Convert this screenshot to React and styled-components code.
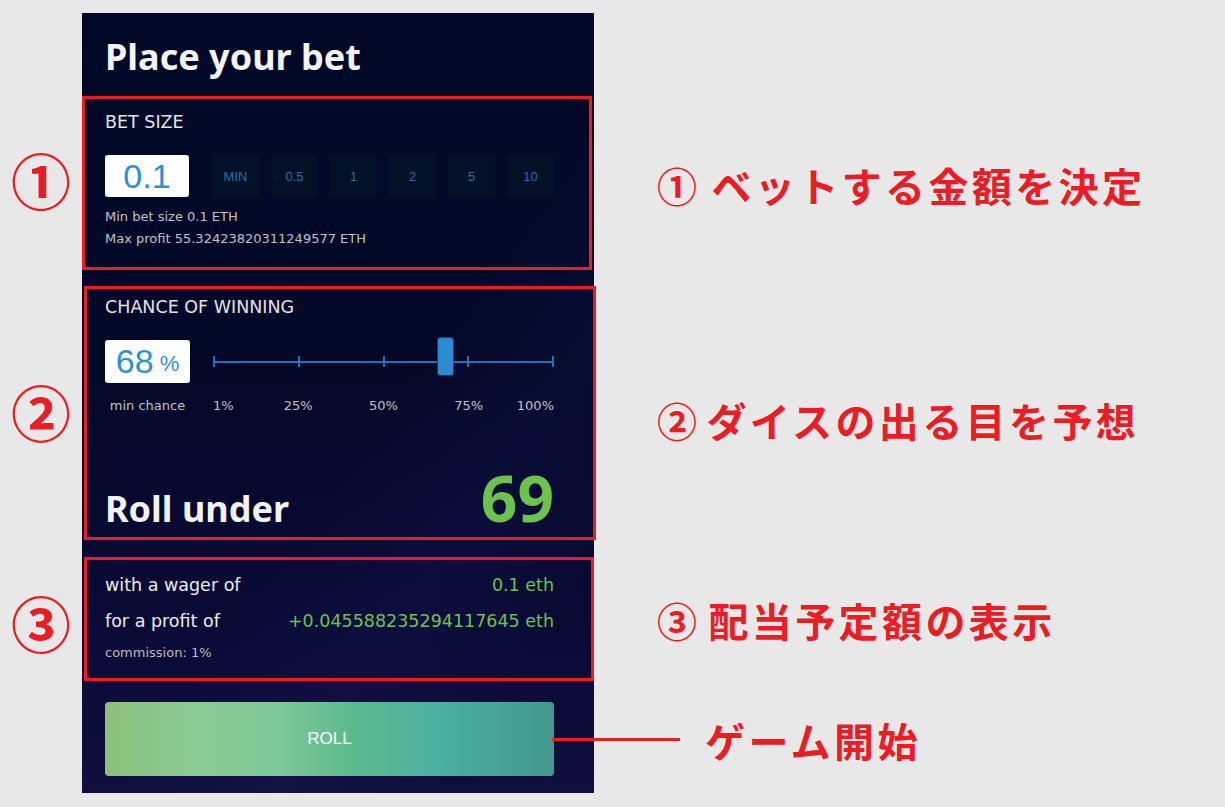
import React from "react";
import styled, { createGlobalStyle } from "styled-components";

const GlobalStyle = createGlobalStyle`
  html, body {
    margin: 0;
    padding: 0;
    background: #e8e8e8;
  }
  #root {
    padding-top: 13px;
  }
`;

const red = "#ec1c24";
const green = "#6cc24a";
const blue = "#2f8fd3";
const textFont = `"DejaVu Sans", "Noto Sans", sans-serif`;

const Page = styled.div`
  display: grid;
  grid-template-columns: 82px 512px 1fr;
  grid-template-rows: 83px 174px 16px 254px 17px 124px 112px;
  font-family: "Noto Sans", "Open Sans", sans-serif;
`;

const PanelBg = styled.div`
  grid-column: 2;
  grid-row: 1 / -1;
  background:
    linear-gradient(125deg, rgba(255, 255, 255, 0) 55%, rgba(40, 40, 120, 0.12) 70%, rgba(255, 255, 255, 0) 85%),
    linear-gradient(180deg, #020828 0%, #030828 45%, #0a0b36 80%, #100f3d 100%);
`;

const Title = styled.h1`
  grid-column: 2;
  grid-row: 1;
  margin: 0;
  padding: 20px 0 0 23px;
  color: #f2f2f2;
  font-size: 36px;
  font-weight: 700;
  line-height: 48px;
`;

const Box = styled.section`
  grid-column: 2;
  grid-row: ${(p) => p.row};
  margin-left: ${(p) => p.ml}px;
  width: ${(p) => p.w}px;
  box-sizing: border-box;
  border: 3px solid ${red};
  padding: ${(p) => p.pad};
  display: flex;
  flex-direction: column;
  z-index: 1;
`;

const Label = styled.div`
  color: #e4e4e4;
  font-family: ${textFont};
  font-size: 17.5px;
  line-height: 20px;
`;

const InputRow = styled.div`
  display: flex;
  align-items: center;
  gap: 23px;
  margin-top: ${(p) => p.mt}px;
`;

const ValueBox = styled.div`
  width: 85px;
  height: ${(p) => p.h}px;
  box-sizing: border-box;
  background: #fff;
  border-radius: 3px;
  display: flex;
  align-items: center;
  justify-content: center;
  color: ${blue};
  font-family: "Liberation Sans", Arial, sans-serif;
  font-size: 34px;
`;

const Percent = styled.span`
  font-size: 22px;
  margin-left: 6px;
  margin-top: 4px;
`;

const Presets = styled.div`
  display: flex;
  gap: 12px;
`;

const Preset = styled.button`
  width: 47px;
  height: 42px;
  border: 0;
  border-radius: 3px;
  background: #031127;
  color: #1f70ae;
  font-family: "Liberation Sans", Arial, sans-serif;
  font-size: 13px;
  padding: 0;
`;

const Note = styled.div`
  color: #c2c2c2;
  font-family: ${textFont};
  font-size: 13px;
  line-height: 22px;
`;

const Notes = styled.div`
  margin-top: 9px;
`;

const Slider = styled.div`
  position: relative;
  flex: 1;
  height: 12px;
  display: flex;
  justify-content: space-between;
  align-items: center;
  background: linear-gradient(#1f74b5, #1f74b5) center / 100% 2px no-repeat;
`;

const Tick = styled.span`
  width: 2px;
  height: 11px;
  background: #1f74b5;
`;

const Thumb = styled.span`
  position: absolute;
  top: -19px;
  width: 17px;
  height: 39px;
  border-radius: 3px;
  background: #2a8bd1;
  border: 1px solid #0f3b66;
  box-sizing: border-box;
`;

const ScaleRow = styled.div`
  display: grid;
  grid-template-columns: 85px 1fr;
  column-gap: 23px;
  margin-top: 13px;
`;

const Scale = styled.div`
  display: grid;
  grid-template-columns: repeat(8, 1fr);
`;

const ScaleLabel = styled(Note)`
  font-size: 13px;
  line-height: 20px;
  white-space: nowrap;
  text-align: ${(p) => p.align || "center"};
  grid-column: ${(p) => p.span};
`;

const RollUnder = styled.div`
  margin-top: auto;
  display: flex;
  justify-content: space-between;
  align-items: baseline;
`;

const RollText = styled.div`
  color: #f2f2f2;
  font-size: 36px;
  font-weight: 700;
  line-height: 40px;
`;

const RollNumber = styled.div`
  color: ${green};
  font-size: 64px;
  font-weight: 700;
  line-height: 62px;
`;

const PayRow = styled.div`
  display: flex;
  justify-content: space-between;
  font-family: ${textFont};
  font-size: 17.5px;
  line-height: 22px;
  color: #ececec;
  margin-bottom: 14px;
`;

const Green = styled.span`
  color: ${green};
  font-size: 17.5px;
`;

const Commission = styled.div`
  color: #bdbdbd;
  font-family: ${textFont};
  font-size: 13px;
  line-height: 18px;
  margin-top: -2px;
`;

const RollRow = styled.div`
  grid-column: 2 / 4;
  grid-row: 7;
  display: flex;
  align-items: center;
  align-self: start;
  padding: 21px 0 0 23px;
`;

const RollButton = styled.button`
  width: 449px;
  height: 74px;
  border: 0;
  border-radius: 4px;
  background: linear-gradient(
    90deg,
    #8cc17a 0%,
    #89ca94 20%,
    #7fc898 38%,
    #5dba8e 55%,
    #4aafa0 75%,
    #44978c 100%
  );
  color: #fff;
  font-family: "Liberation Sans", Arial, sans-serif;
  font-size: 17px;
  padding: 0;
`;

const Connector = styled.span`
  width: 128px;
  height: 3px;
  margin-left: -2px;
  background: ${red};
  z-index: 1;
`;

const Callout = styled.div`
  grid-column: 3;
  grid-row: ${(p) => p.row};
  align-self: center;
  padding-left: ${(p) => p.pl || 63}px;
  margin-top: ${(p) => p.mt || 0}px;
  color: ${red};
  font-family: "Noto Sans CJK JP", sans-serif;
  font-weight: 700;
  font-size: 40px;
  letter-spacing: 3.4px;
  white-space: nowrap;
`;

const Num = styled.span`
  margin-right: ${(p) => p.gap}px;
`;

const GameStart = styled(Callout)`
  padding-left: 25px;
  margin-top: 2px;
`;

const Marker = styled.div`
  grid-column: 1;
  grid-row: ${(p) => p.row};
  align-self: center;
  justify-self: center;
  margin-top: ${(p) => p.mt || 0}px;
  color: ${red};
  font-family: "Noto Sans CJK JP", sans-serif;
  font-weight: 700;
  font-size: 60px;
  line-height: 1;
`;

const presets = ["MIN", "0.5", "1", "2", "5", "10"];

export default function App() {
  return (
    <>
      <GlobalStyle />
      <Page>
        <PanelBg />
        <Title>Place your bet</Title>

        <Marker row={2} mt={-8}>①</Marker>
        <Box row={2} ml={0} w={510} pad="13px 35px 17px 20px">
          <Label>BET SIZE</Label>
          <InputRow mt={23}>
            <ValueBox h={42}>0.1</ValueBox>
            <Presets>
              {presets.map((p) => (
                <Preset key={p}>{p}</Preset>
              ))}
            </Presets>
          </InputRow>
          <Notes>
            <Note>Min bet size 0.1 ETH</Note>
            <Note>Max profit 55.32423820311249577 ETH</Note>
          </Notes>
        </Box>
        <Callout row={2} mt={4}>
          <Num gap={11}>①</Num>ベットする金額を決定
        </Callout>

        <Marker row={4} mt={-4}>②</Marker>
        <Box row={4} ml={2} w={512} pad="8px 39px 8px 18px">
          <Label>CHANCE OF WINNING</Label>
          <InputRow mt={23}>
            <ValueBox h={43}>
              68<Percent>%</Percent>
            </ValueBox>
            <Slider>
              <Tick />
              <Tick />
              <Tick />
              <Tick />
              <Tick />
              <Thumb style={{ left: "calc(68% - 8px)" }} />
            </Slider>
          </InputRow>
          <ScaleRow>
            <ScaleLabel>min chance</ScaleLabel>
            <Scale>
              <ScaleLabel span="1" align="left">1%</ScaleLabel>
              <ScaleLabel span="2 / 4">25%</ScaleLabel>
              <ScaleLabel span="4 / 6">50%</ScaleLabel>
              <ScaleLabel span="6 / 8">75%</ScaleLabel>
              <ScaleLabel span="8" align="right">100%</ScaleLabel>
            </Scale>
          </ScaleRow>
          <RollUnder>
            <RollText>Roll under</RollText>
            <RollNumber>69</RollNumber>
          </RollUnder>
        </Box>
        <Callout row={4} mt={14}>
          <Num gap={6}>②</Num>ダイスの出る目を予想
        </Callout>

        <Marker row={6} mt={6}>③</Marker>
        <Box row={6} ml={2} w={510} pad="14px 37px 10px 18px">
          <PayRow>
            <span>with a wager of</span>
            <Green>0.1 eth</Green>
          </PayRow>
          <PayRow>
            <span>for a profit of</span>
            <Green>+0.045588235294117645 eth</Green>
          </PayRow>
          <Commission>commission: 1%</Commission>
        </Box>
        <Callout row={6} mt={2}>
          <Num gap={8}>③</Num>配当予定額の表示
        </Callout>

        <RollRow>
          <RollButton>ROLL</RollButton>
          <Connector />
          <GameStart as="div">ゲーム開始</GameStart>
        </RollRow>
      </Page>
    </>
  );
}
